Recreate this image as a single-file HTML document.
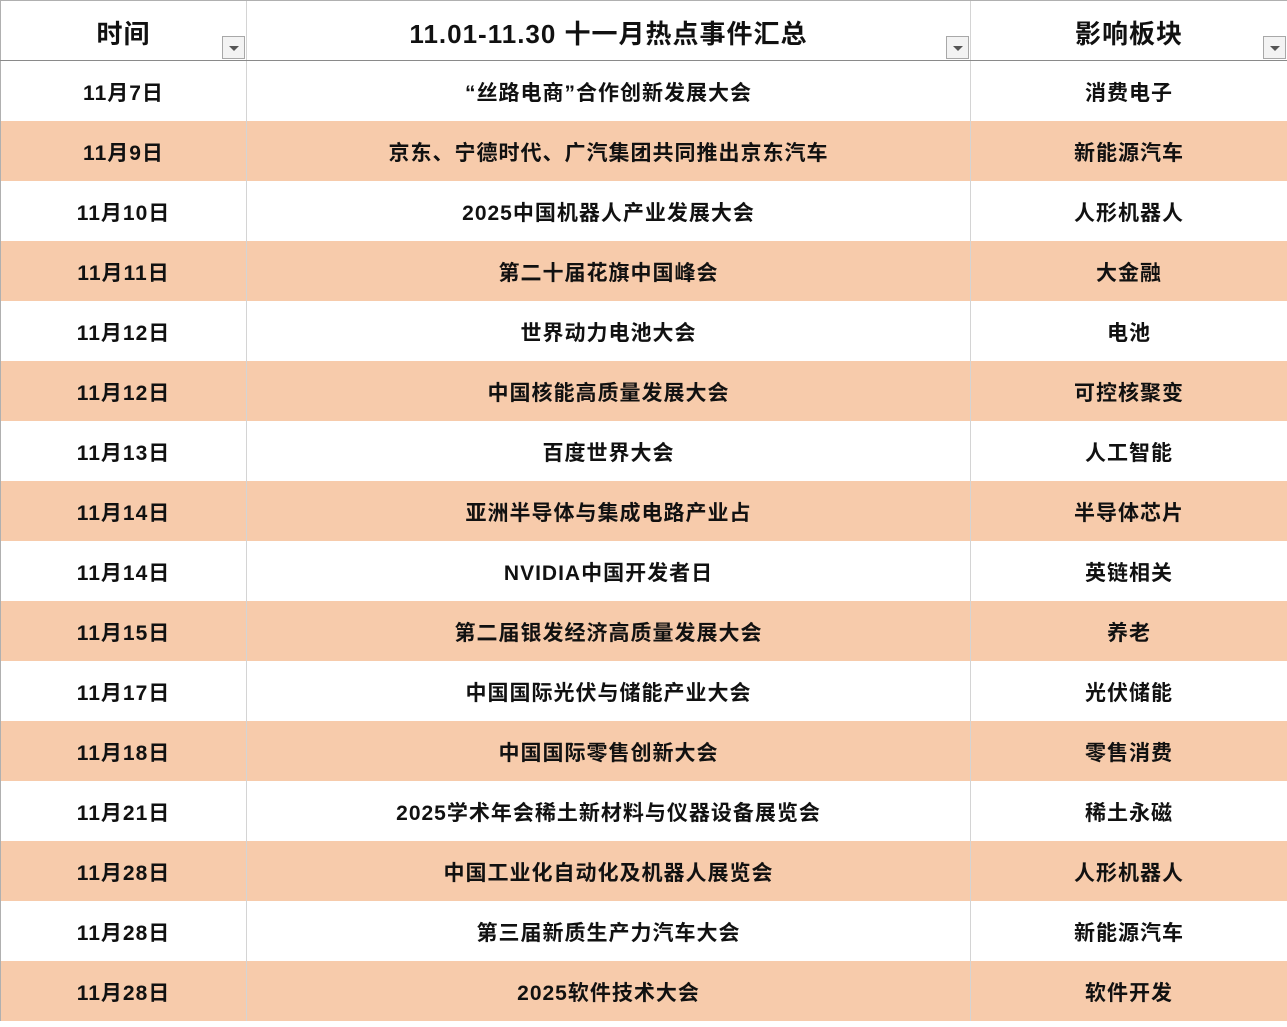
<!DOCTYPE html><html><head><meta charset="utf-8"><style>
body{margin:0;width:1287px;height:1020px;overflow:hidden;background:#fff;font-family:"Liberation Sans","Noto Sans CJK SC",sans-serif;color:#111}
.r{position:absolute;left:0;width:1287px;height:60px;display:flex}
.r div{height:60px;line-height:66px;text-align:center;font-size:21px;font-weight:bold;letter-spacing:1px;position:relative;box-sizing:border-box;border-left:1px solid #d4d4d4}
.r div:nth-child(1){width:246px;border-left:1px solid #b0b0b0}
.r div:nth-child(2){width:724px}
.r div:nth-child(3){width:317px}
.o{background:#f7cbab}
.h{top:0;height:61px;border-top:1px solid #b0b0b0;border-bottom:1px solid #8a8a8a;box-sizing:border-box}
.h div{font-size:26px;line-height:66px;height:59px}
.dd{position:absolute;right:1px;bottom:1px;width:23px;height:23px;border:1px solid #a8a8a8;background:#f3f3f3;box-sizing:border-box}
.dd:after{content:"";position:absolute;left:6px;top:9px;border-left:5px solid transparent;border-right:5px solid transparent;border-top:5px solid #555}
</style></head><body>
<div class="r h"><div>时间<span class="dd"></span></div><div>11.01-11.30 十一月热点事件汇总<span class="dd"></span></div><div>影响板块<span class="dd"></span></div></div>
<div class="r" style="top:61px"><div>11月7日</div><div>“丝路电商”合作创新发展大会</div><div>消费电子</div></div>
<div class="r o" style="top:121px"><div>11月9日</div><div>京东、宁德时代、广汽集团共同推出京东汽车</div><div>新能源汽车</div></div>
<div class="r" style="top:181px"><div>11月10日</div><div>2025中国机器人产业发展大会</div><div>人形机器人</div></div>
<div class="r o" style="top:241px"><div>11月11日</div><div>第二十届花旗中国峰会</div><div>大金融</div></div>
<div class="r" style="top:301px"><div>11月12日</div><div>世界动力电池大会</div><div>电池</div></div>
<div class="r o" style="top:361px"><div>11月12日</div><div>中国核能高质量发展大会</div><div>可控核聚变</div></div>
<div class="r" style="top:421px"><div>11月13日</div><div>百度世界大会</div><div>人工智能</div></div>
<div class="r o" style="top:481px"><div>11月14日</div><div>亚洲半导体与集成电路产业占</div><div>半导体芯片</div></div>
<div class="r" style="top:541px"><div>11月14日</div><div>NVIDIA中国开发者日</div><div>英链相关</div></div>
<div class="r o" style="top:601px"><div>11月15日</div><div>第二届银发经济高质量发展大会</div><div>养老</div></div>
<div class="r" style="top:661px"><div>11月17日</div><div>中国国际光伏与储能产业大会</div><div>光伏储能</div></div>
<div class="r o" style="top:721px"><div>11月18日</div><div>中国国际零售创新大会</div><div>零售消费</div></div>
<div class="r" style="top:781px"><div>11月21日</div><div>2025学术年会稀土新材料与仪器设备展览会</div><div>稀土永磁</div></div>
<div class="r o" style="top:841px"><div>11月28日</div><div>中国工业化自动化及机器人展览会</div><div>人形机器人</div></div>
<div class="r" style="top:901px"><div>11月28日</div><div>第三届新质生产力汽车大会</div><div>新能源汽车</div></div>
<div class="r o" style="top:961px"><div>11月28日</div><div>2025软件技术大会</div><div>软件开发</div></div>
</body></html>
